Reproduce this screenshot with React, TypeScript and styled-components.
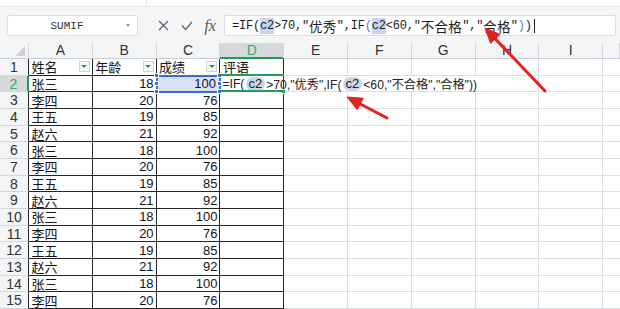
import React from 'react';
import styled, { createGlobalStyle } from 'styled-components';

const GlobalStyle = createGlobalStyle`
	html,
	body {
		margin: 0;
		padding: 0;
		background: #fff;
	}
	body {
		font-family: 'Liberation Sans', 'Noto Sans CJK SC', sans-serif;
		overflow: hidden;
	}
`;

const GRID = '#d8dde6';
const DARK = '#262626';
const GREEN = '#1f9d57';
const BLUE = '#3a6cd7';

const Page = styled.div`
	position: relative;
	width: 620px;
	height: 309px;
	overflow: hidden;
	display: flex;
	flex-direction: column;
`;

const TopStrip = styled.div`
	box-sizing: border-box;
	height: 7px;
	background: #fff;
	border-bottom: 1px solid #e6e7ea;
	display: flex;
	padding-left: 146px;
	.sep {
		width: 1px;
		background: #e2e3e6;
	}
`;

const FormulaBar = styled.div`
	box-sizing: border-box;
	height: 36.33px;
	background: #f4f5f7;
	display: flex;
	align-items: center;
	padding: 2.5px 4px 0 7px;
`;

const NameBox = styled.div`
	box-sizing: border-box;
	width: 131px;
	height: 21px;
	background: #fff;
	border: 1px solid #dcdde0;
	border-radius: 3px;
	display: grid;
	grid-template-columns: 1fr 11px;
	align-items: center;
	font-family: 'Liberation Mono', monospace;
	font-size: 11px;
	color: #333;
	span {
		text-align: center;
	}
	i {
		width: 0;
		height: 0;
		border-left: 2.5px solid transparent;
		border-right: 2.5px solid transparent;
		border-top: 3px solid #9a9a9a;
	}
`;

const Tools = styled.div`
	display: flex;
	align-items: center;
	margin-left: 13px;
`;

const ToolSlot = styled.div<{ $w: number }>`
	width: ${(p) => p.$w}px;
	height: 21px;
	display: flex;
	align-items: center;
	justify-content: center;
	color: #5f6268;
`;

const Fx = styled.span`
	font-family: 'Liberation Serif', serif;
	font-style: italic;
	font-size: 17px;
	color: #5f6268;
	letter-spacing: -0.5px;
`;

const FormulaInput = styled.div`
	box-sizing: border-box;
	flex: 1;
	height: 21px;
	margin-left: 3px;
	background: #fff;
	border: 1px solid #dcdde0;
	border-radius: 2px;
	display: flex;
	align-items: center;
	padding-left: 7px;
	font-family: 'Liberation Mono', monospace;
	font-size: 12px;
	letter-spacing: -0.2px;
	color: #1c1c1c;
	white-space: nowrap;
	line-height: 16px;
`;

const Cjk = styled.span`
	font-family: 'Noto Sans CJK SC', sans-serif;
	font-size: 13.5px;
	letter-spacing: 0.3px;
`;

const RefMark = styled.span`
	background: #c7d5f1;
`;

const Paren = styled.span`
	color: #4d7fe0;
`;

const Caret = styled.span`
	display: inline-block;
	width: 1px;
	height: 14px;
	background: #222;
	margin-left: 2px;
`;

const Sheet = styled.div`
	display: grid;
	grid-template-columns: 29px repeat(9, 63.8px) 1fr;
	grid-template-rows: repeat(16, 16.667px);
	font-size: 13px;
	color: #141414;
`;

const Corner = styled.div`
	box-sizing: border-box;
	background: #f4f5f7;
	border-right: 1px solid #d3d6db;
	border-bottom: 1px solid #c9cdd4;
	display: flex;
	align-items: flex-end;
	justify-content: flex-end;
	padding: 0 3px 2px 0;
	i {
		width: 0;
		height: 0;
		border-left: 10px solid transparent;
		border-bottom: 10px solid #cfd1d5;
	}
`;

const ColHead = styled.div<{ $active?: boolean }>`
	box-sizing: border-box;
	background: ${(p) => (p.$active ? '#d6d8dc' : '#f4f5f7')};
	color: ${(p) => (p.$active ? '#3aa86a' : '#333')};
	border-right: 1px solid #d3d6db;
	border-bottom: ${(p) => (p.$active ? `2px solid ${GREEN}` : '1px solid #c9cdd4')};
	display: flex;
	align-items: center;
	justify-content: center;
	font-size: 14px;
`;

const RowHead = styled.div<{ $active?: boolean }>`
	box-sizing: border-box;
	background: ${(p) => (p.$active ? '#d6d8dc' : '#f4f5f7')};
	color: ${(p) => (p.$active ? '#3aa86a' : '#333')};
	border-right: ${(p) => (p.$active ? `2px solid ${GREEN}` : `1px solid ${DARK}`)};
	border-bottom: 1px solid #d3d6db;
	display: flex;
	align-items: center;
	justify-content: center;
	font-size: 14px;
`;

const Cell = styled.div<{ $dark?: boolean; $right?: boolean; $open?: boolean; $last?: boolean }>`
	box-sizing: border-box;
	min-width: 0;
	display: flex;
	align-items: center;
	justify-content: ${(p) => (p.$right ? 'flex-end' : 'flex-start')};
	padding: 0 2px 0 2.5px;
	white-space: nowrap;
	border-right: ${(p) => (p.$open || p.$last ? '0' : `1px solid ${p.$dark ? DARK : GRID}`)};
	border-bottom: 1px solid ${(p) => (p.$dark ? DARK : GRID)};
	overflow: hidden;
`;

const SelectedCell = styled(Cell)`
	position: relative;
	z-index: 2;
	overflow: visible;
	padding-right: 3.5px;
	background: #d9e1f4;
	outline: 2px solid ${BLUE};
	outline-offset: -1px;
`;

const Handle = styled.span<{ $x: 'l' | 'r'; $y: 't' | 'm' | 'b' }>`
	position: absolute;
	width: 3px;
	height: 3px;
	background: ${BLUE};
	border: 1px solid #fff;
	${(p) => (p.$x === 'l' ? 'left: -3px;' : 'right: -3px;')}
	${(p) => (p.$y === 't' ? 'top: -3px;' : p.$y === 'b' ? 'bottom: -3px;' : 'top: calc(50% - 2.5px);')}
`;

const EditCell = styled(Cell)`
	position: relative;
	z-index: 3;
	overflow: visible;
	padding-left: 2px;
	font-size: 12.2px;
	color: #222;
	&::before,
	&::after {
		content: '';
		position: absolute;
		left: 0;
		right: -1px;
		height: 2px;
		background: ${GREEN};
	}
	&::before {
		top: -2px;
	}
	&::after {
		bottom: -1px;
	}
	.knob {
		position: absolute;
		right: -3px;
		bottom: -3px;
		width: 3px;
		height: 3px;
		background: ${GREEN};
		border: 1px solid #fff;
	}
`;

const Pill = styled.span`
	display: inline-block;
	background: #cbd5ea;
	border-radius: 7px;
	padding: 0 2.5px;
	margin: 0 1.5px;
	font-size: 13px;
	line-height: 14px;
`;

const FilterBtn = styled.span`
	box-sizing: border-box;
	flex: none;
	width: 11px;
	height: 11px;
	margin-left: auto;
	background: #f7f7f7;
	border: 1px solid #d4d4d4;
	display: flex;
	align-items: center;
	justify-content: center;
	i {
		width: 0;
		height: 0;
		border-left: 3px solid transparent;
		border-right: 3px solid transparent;
		border-top: 3px solid ${GREEN};
	}
`;

const Overlay = styled.svg`
	position: absolute;
	left: 0;
	top: 0;
	pointer-events: none;
`;

const COLS = ['A', 'B', 'C', 'D', 'E', 'F', 'G', 'H', 'I', ''];
const LABELS = ['姓名', '年龄', '成绩', '评语'];
const PEOPLE: [string, number, number][] = [
	['张三', 18, 100],
	['李四', 20, 76],
	['王五', 19, 85],
	['赵六', 21, 92],
];

function MixedText({ text }: { text: string }) {
	const parts = text.split(/([\u4e00-\u9fff]+)/);
	return (
		<>
			{parts.map((s, i) => (/[\u4e00-\u9fff]/.test(s) ? <Cjk key={i}>{s}</Cjk> : <React.Fragment key={i}>{s}</React.Fragment>))}
		</>
	);
}

function Arrow({ x1, y1, x2, y2 }: { x1: number; y1: number; x2: number; y2: number }) {
	const dx = x2 - x1;
	const dy = y2 - y1;
	const len = Math.hypot(dx, dy);
	const ux = dx / len;
	const uy = dy / len;
	const hl = 15;
	const hw = 6.5;
	const bx = x2 - ux * hl;
	const by = y2 - uy * hl;
	const pts = `${x2},${y2} ${bx - uy * hw},${by + ux * hw} ${bx + uy * hw},${by - ux * hw}`;
	return (
		<g fill='#e3221c' stroke='#e3221c'>
			<line x1={x1} y1={y1} x2={bx + ux * 2} y2={by + uy * 2} strokeWidth={3} strokeLinecap='round' />
			<polygon points={pts} strokeWidth={1} strokeLinejoin='round' />
		</g>
	);
}

export default function App() {
	const rows = Array.from({ length: 15 }, (_, i) => i + 1);
	return (
		<Page>
			<GlobalStyle />
			<TopStrip>
				<div className='sep' />
			</TopStrip>
			<FormulaBar>
				<NameBox>
					<span>SUMIF</span>
					<i />
				</NameBox>
				<Tools>
					<ToolSlot $w={24}>
						<svg width='11' height='11' viewBox='0 0 11 11'>
							<path d='M1 1L10 10M10 1L1 10' stroke='currentColor' strokeWidth='1.2' fill='none' />
						</svg>
					</ToolSlot>
					<ToolSlot $w={24}>
						<svg width='12' height='10' viewBox='0 0 12 10'>
							<path d='M1 4.5L4.5 8.5L11 1' stroke='currentColor' strokeWidth='1.2' fill='none' />
						</svg>
					</ToolSlot>
					<ToolSlot $w={22}>
						<Fx>fx</Fx>
					</ToolSlot>
				</Tools>
				<FormulaInput>
					=IF(<RefMark>c2</RefMark>&gt;70,"<MixedText text='优秀' />",IF<Paren>(</Paren>
					<RefMark>c2</RefMark>&lt;60,"<MixedText text='不合格' />","<MixedText text='合格' />"<Paren>)</Paren>)
					<Caret />
				</FormulaInput>
			</FormulaBar>
			<Sheet>
				<Corner>
					<i />
				</Corner>
				{COLS.map((c, i) => (
					<ColHead key={i} $active={i === 3}>
						{c}
					</ColHead>
				))}
				{rows.map((r) => {
					const person = PEOPLE[(r - 2 + 4) % 4];
					return (
						<React.Fragment key={r}>
							<RowHead $active={r === 2}>{r}</RowHead>
							{COLS.map((_, c) => {
								const dark = c < 4;
								const last = c === COLS.length - 1;
								if (r === 1) {
									return (
										<Cell key={c} $dark={dark} $last={last}>
											{LABELS[c]}
											{c < 3 && (
												<FilterBtn>
													<i />
												</FilterBtn>
											)}
										</Cell>
									);
								}
								if (r === 2 && c === 2) {
									return (
										<SelectedCell key={c} $dark $right>
											{person[2]}
											<Handle $x='l' $y='t' />
											<Handle $x='l' $y='m' />
											<Handle $x='l' $y='b' />
											<Handle $x='r' $y='t' />
											<Handle $x='r' $y='m' />
											<Handle $x='r' $y='b' />
										</SelectedCell>
									);
								}
								if (r === 2 && c === 3) {
									return (
										<EditCell key={c} $dark>
											=IF(<Pill>c2</Pill>&gt;70,"优秀",IF(<Pill>c2</Pill>&lt;60,"不合格","合格"))
											<span className='knob' />
										</EditCell>
									);
								}
								return (
									<Cell key={c} $dark={dark} $right={c === 1 || c === 2} $open={r === 2 && c >= 4 && c <= 6} $last={last}>
										{c === 0 ? person[0] : c === 1 ? person[1] : c === 2 ? person[2] : ''}
									</Cell>
								);
							})}
						</React.Fragment>
					);
				})}
			</Sheet>
			<Overlay width='620' height='309' viewBox='0 0 620 309'>
				<Arrow x1={545} y1={91} x2={485} y2={28} />
				<Arrow x1={387} y1={118} x2={347} y2={97} />
			</Overlay>
		</Page>
	);
}
